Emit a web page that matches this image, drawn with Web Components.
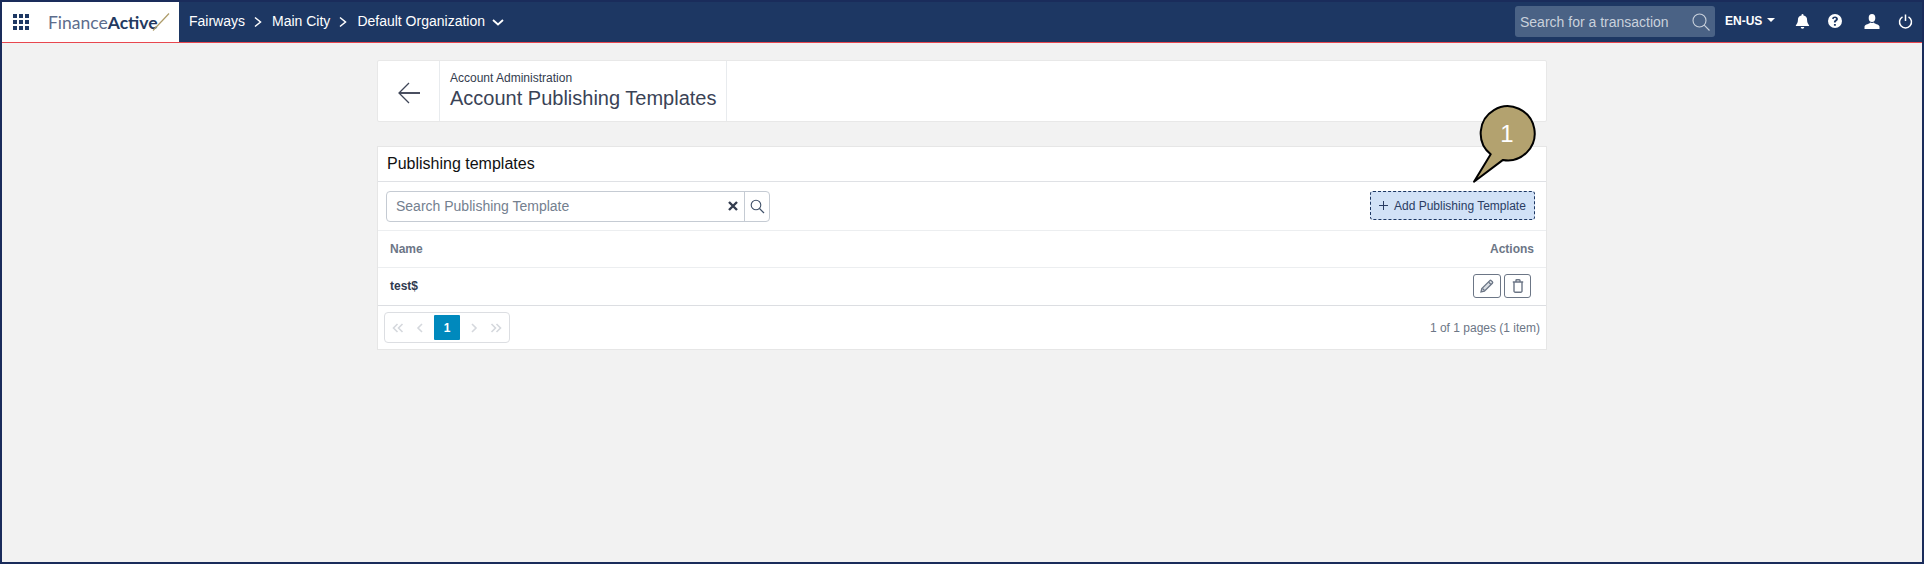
<!DOCTYPE html>
<html lang="en">
<head>
<meta charset="utf-8">
<title>Account Publishing Templates</title>
<style>
    html, body { margin: 0; height: 100%; }
    body { font-family: "Liberation Sans", Arial, sans-serif; background: #f2f2f2; overflow: hidden; }
</style>
</head>
<body>
<fa-shell>
    <fa-header></fa-header>
    <fa-page-title section="Account Administration" title-text="Account Publishing Templates"></fa-page-title>
    <fa-templates-card></fa-templates-card>
    <fa-callout label="1"></fa-callout>
</fa-shell>

<script>
class FaShell extends HTMLElement {
    connectedCallback() {
        this.attachShadow({ mode: "open" });
        this.shadowRoot.innerHTML = `
            <style>
                :host {
                    display: block;
                    position: relative;
                    box-sizing: border-box;
                    width: 1924px;
                    height: 564px;
                    border: 2px solid #1a2c5b;
                    background: #f2f2f2;
                }
                #content {
                    width: 1170px;
                    margin: 17px auto 0;
                    display: flex;
                    flex-direction: column;
                    gap: 24px;
                }
            </style>
            <slot name="header"></slot>
            <div id="content"><slot></slot></div>
        `;
        this.querySelector("fa-header").slot = "header";
    }
}

class FaHeader extends HTMLElement {
    connectedCallback() {
        this.attachShadow({ mode: "open" });
        this.shadowRoot.innerHTML = `
            <style>
                :host {
                    display: flex;
                    align-items: stretch;
                    height: 40px;
                    background: #1d3763;
                    border-bottom: 1px solid #e8474f;
                    color: #fff;
                    font-size: 14px;
                }
                #brand {
                    width: 177px;
                    background: #fff;
                    display: flex;
                    align-items: center;
                    color: #1d3763;
                }
                #grid {
                    margin-left: 11px;
                    display: grid;
                    grid-template-columns: repeat(3, 4px);
                    grid-auto-rows: 4px;
                    gap: 2px;
                    width: 16px;
                }
                #grid i { background: #1d3763; }
                #logo {
                    margin-left: 19px;
                    font-family: Lato, "Liberation Sans", sans-serif;
                    font-size: 17.5px;
                    color: #5d6d8c;
                    display: flex;
                    align-items: center;
                }
                #logo b { color: #23395f; font-weight: bold; }
                #logo svg { margin-left: -6px; }
                #crumbs {
                    display: flex;
                    align-items: center;
                    margin-left: 10px;
                    gap: 9px;
                }
                #crumbs span { position: relative; top: -1px; }
                #org-arrow { margin-left: -2px; }
                #right {
                    margin-left: auto;
                    display: flex;
                    align-items: center;
                    padding-right: 9px;
                }
                #search {
                    box-sizing: border-box;
                    width: 200px;
                    height: 31px;
                    margin-top: -1px;
                    background: #4a6285;
                    border-radius: 3px;
                    display: flex;
                    align-items: center;
                    justify-content: space-between;
                    padding: 0 5px;
                    color: #c9d1dc;
                }
                #lang {
                    margin-left: 10px;
                    font-size: 12px;
                    font-weight: bold;
                    display: flex;
                    align-items: center;
                    gap: 5px;
                    width: 70px;
                    margin-top: -2px;
                }
                #lang::after {
                    content: "";
                    border-left: 4px solid transparent;
                    border-right: 4px solid transparent;
                    border-top: 4px solid #fff;
                    margin-top: -3px;
                }
                #icons { display: flex; align-items: center; margin-top: -2px; }
                #icons svg { display: block; fill: #fff; }
            </style>
            <div id="brand">
                <div id="grid"><i></i><i></i><i></i><i></i><i></i><i></i><i></i><i></i><i></i></div>
                <div id="logo"><span>Finance<b>Active</b></span>
                    <svg width="18" height="18" viewBox="0 0 18 18"><path d="M1 17.500 17 .5" stroke="#ad9b68" stroke-width="1.200" fill="none"/></svg>
                </div>
            </div>
            <div id="crumbs">
                <span>Fairways</span>
                <svg width="9" height="12" viewBox="0 0 9 12"><path d="M1 1.500 6.500 6 1 10.500" fill="none" stroke="#fff" stroke-width="1.500"/></svg>
                <span>Main City</span>
                <svg width="9" height="12" viewBox="0 0 9 12"><path d="M1 1.500 6.500 6 1 10.500" fill="none" stroke="#fff" stroke-width="1.500"/></svg>
                <span>Default Organization</span>
                <svg id="org-arrow" width="12" height="9" viewBox="0 0 12 9"><path d="M1 2 6 6.500 11 2" fill="none" stroke="#fff" stroke-width="1.800"/></svg>
            </div>
            <div id="right">
                <div id="search">
                    <span>Search for a transaction</span>
                    <svg width="18" height="18" viewBox="0 0 18 18"><circle cx="7.500" cy="7.500" r="6.500" fill="none" stroke="#c9d1dc" stroke-width="1.100"/><path d="M12.200 12.200l5.300 5.300" stroke="#c9d1dc" stroke-width="1.100"/></svg>
                </div>
                <div id="lang">EN-US</div>
                <div id="icons">
                    <svg width="15" height="15" viewBox="0 0 14 15"><path d="M7 0a1 1 0 0 1 1 1v.6A4.400 4.400 0 0 1 11.600 6c0 3.600 2.100 4.700 2.100 6H.3c0-1.300 2.100-2.400 2.100-6A4.400 4.400 0 0 1 6 1.600V1a1 1 0 0 1 1-1zM5.200 13h3.600a1.800 1.800 0 0 1-3.600 0z"/></svg>
                    <svg width="14" height="14" viewBox="0 0 13 13" style="margin-left:18px"><path fill-rule="evenodd" d="M6.500 0a6.500 6.500 0 1 1 0 13 6.500 6.500 0 0 1 0-13zM5.500 9.300v1.500h1.800V9.300zM6.500 2.300c-1.500 0-2.500.8-2.700 2.100l1.500.4c.1-.7.500-1 1.100-1 .6 0 1 .3 1 .8 0 .4-.3.7-.8 1-.8.5-1.100 1-1.100 1.800v.6h1.700v-.4c0-.4.200-.6.700-.9.800-.5 1.300-1.100 1.300-2.100 0-1.400-1.100-2.300-2.700-2.300z"/></svg>
                    <svg width="16" height="15" viewBox="0 0 16 15" style="margin-left:22px"><ellipse cx="8" cy="4" rx="3.300" ry="4"/><path d="M6 8.500c0 1.500-5 1.500-5.500 4V15h15v-2.500c-.5-2.500-5.500-2.500-5.500-4-1 .6-3 .6-4 0z"/></svg>
                    <svg width="15" height="15" viewBox="0 0 15 15" style="margin-left:18px"><path d="M4.500 2.800a6 6 0 1 0 6 0" fill="none" stroke="#fff" stroke-width="1.500"/><path d="M7.500.5v6.500" stroke="#fff" stroke-width="1.500"/></svg>
                </div>
            </div>
        `;
    }
}

class FaPageTitle extends HTMLElement {
    connectedCallback() {
        this.attachShadow({ mode: "open" });
        this.shadowRoot.innerHTML = `
            <style>
                :host {
                    display: flex;
                    box-sizing: border-box;
                    height: 62px;
                    background: #fff;
                    border: 1px solid #e8e8e8;
                    border-radius: 2px;
                    color: #333c4e;
                }
                #back {
                    width: 62px;
                    border-right: 1px solid #e8ebee;
                    display: flex;
                    align-items: center;
                    justify-content: center;
                    box-sizing: border-box;
                }
                #back svg { margin-top: 3px; }
                #title {
                    padding: 10px 10px 0 10px;
                    border-right: 1px solid #e8ebee;
                }
                #section { font-size: 12px; line-height: 15px; }
                h1 { margin: 0; font-weight: normal; font-size: 20px; line-height: 24px; color: #3a4356; }
            </style>
            <div id="back">
                <svg width="24" height="22" viewBox="0 0 24 22"><path d="M23 11H2" fill="none" stroke="#4a4f60" stroke-width="2"/><path d="M12 1 2 11l10 10" fill="none" stroke="#3f4658" stroke-width="1.300"/></svg>
            </div>
            <div id="title">
                <div id="section">${this.getAttribute("section")}</div>
                <h1>${this.getAttribute("title-text")}</h1>
            </div>
        `;
    }
}

class FaTemplatesCard extends HTMLElement {
    connectedCallback() {
        this.attachShadow({ mode: "open" });
        this.shadowRoot.innerHTML = `
            <style>
                :host {
                    display: block;
                    box-sizing: border-box;
                    background: #fff;
                    border: 1px solid #e6e6e6;
                    color: #333c4e;
                    font-size: 12px;
                }
                #heading {
                    box-sizing: border-box;
                    height: 35px;
                    padding: 0 0 0 9px;
                    display: flex;
                    align-items: center;
                    font-size: 16px;
                    color: #111;
                    border-bottom: 1px solid #dfe1e5;
                }
                #toolbar {
                    height: 49px;
                    padding: 0 11px 0 8px;
                    display: flex;
                    align-items: center;
                    justify-content: space-between;
                    border-bottom: 1px solid #eceef0;
                    box-sizing: border-box;
                }
                #search {
                    box-sizing: border-box;
                    width: 384px;
                    height: 31px;
                    border: 1px solid #c5cbd3;
                    border-radius: 4px;
                    display: flex;
                    align-items: center;
                    font-size: 14px;
                    color: #74808f;
                }
                #search span { flex: 1; padding-left: 9px; }
                #clear { margin-right: 5px; display: block; }
                #go {
                    width: 24px;
                    height: 29px;
                    border-left: 1px solid #c5cbd3;
                    display: flex;
                    align-items: center;
                    justify-content: center;
                }
                #add {
                    box-sizing: border-box;
                    width: 165px;
                    height: 29px;
                    margin-top: -1px;
                    padding-left: 7px;
                    background: #d2e2f7;
                    border: 1px dashed #1d3763;
                    border-radius: 3px;
                    display: flex;
                    align-items: center;
                    gap: 5px;
                    color: #2a3c63;
                }
                .row {
                    display: flex;
                    align-items: center;
                    justify-content: space-between;
                    box-sizing: border-box;
                    padding: 0 12px;
                    font-weight: bold;
                }
                #thead { height: 37px; border-bottom: 1px solid #eceef0; color: #6c7686; }
                #trow { height: 38px; border-bottom: 1px solid #dcdee2; padding: 0 15px 2px 12px; color: #2f3a4f; }
                #actions { display: flex; gap: 3px; }
                .icon-btn {
                    box-sizing: border-box;
                    height: 24px;
                    border: 1px solid #6c7686;
                    border-radius: 3px;
                    display: flex;
                    align-items: center;
                    justify-content: center;
                }
                #pager-row {
                    height: 43px;
                    padding: 0 6px;
                    display: flex;
                    align-items: center;
                    justify-content: space-between;
                    color: #6c7686;
                }
                #pager {
                    box-sizing: border-box;
                    width: 126px;
                    height: 31px;
                    border: 1px solid #dcdee2;
                    border-radius: 4px;
                    display: flex;
                    align-items: center;
                    justify-content: space-between;
                    padding: 2px 7px;
                }
                #current {
                    width: 26px;
                    height: 25px;
                    background: #0089bd;
                    border-radius: 1px;
                    color: #fff;
                    font-weight: bold;
                    display: flex;
                    align-items: center;
                    justify-content: center;
                }
                #pager svg { display: block; }
            </style>
            <div id="heading">Publishing templates</div>
            <div id="toolbar">
                <div id="search">
                    <span>Search Publishing Template</span>
                    <svg id="clear" width="12" height="12" viewBox="0 0 12 12"><path d="M2 2l8 8M10 2l-8 8" stroke="#333c4e" stroke-width="2.400"/></svg>
                    <div id="go"><svg width="15" height="15" viewBox="0 0 15 15"><circle cx="6" cy="6" r="4.800" fill="none" stroke="#3f5068" stroke-width="1.100"/><path d="M9.500 9.500l4.500 4.500" stroke="#3f5068" stroke-width="1.200"/></svg></div>
                </div>
                <div id="add">
                    <svg width="11" height="11" viewBox="0 0 11 11"><path d="M5.500 1v9M1 5.500h9" stroke="#2a3c63" stroke-width="1"/></svg>
                    <span>Add Publishing Template</span>
                </div>
            </div>
            <div class="row" id="thead"><span>Name</span><span>Actions</span></div>
            <div class="row" id="trow">
                <span>test$</span>
                <div id="actions">
                    <div class="icon-btn" style="width:28px">
                        <svg width="14" height="14" viewBox="0 0 14 14"><path d="M1 13l.8-3.400L9.800 1.600a1 1 0 0 1 1.400 0l1.200 1.200a1 1 0 0 1 0 1.400L4.400 12.200z" fill="#d9dde3" stroke="#6c7686" stroke-width="1.300"/><path d="M2.500 9.500 4.500 11.500M8.500 3l2.500 2.500" fill="none" stroke="#6c7686" stroke-width="1.100"/></svg>
                    </div>
                    <div class="icon-btn" style="width:27px">
                        <svg width="12" height="14" viewBox="0 0 12 14"><path d="M2 3.500V12a1.200 1.200 0 0 0 1.200 1.200h5.600A1.200 1.200 0 0 0 10 12V3.500M.8 3h10.400M4 3V1.500A.7.7 0 0 1 4.700.8h2.600a.7.7 0 0 1 .7.700V3" fill="none" stroke="#6c7686" stroke-width="1.400"/></svg>
                    </div>
                </div>
            </div>
            <div id="pager-row">
                <div id="pager">
                    <svg width="12" height="10" viewBox="0 0 12 10"><path d="M5.500 1 1.500 5l4 4M10.500 1l-4 4 4 4" fill="none" stroke="#d5d8dd" stroke-width="1.600"/></svg>
                    <svg width="8" height="10" viewBox="0 0 8 10"><path d="M7 1 3 5l4 4" fill="none" stroke="#d5d8dd" stroke-width="1.600"/></svg>
                    <div id="current">1</div>
                    <svg width="8" height="10" viewBox="0 0 8 10"><path d="M1 1l4 4-4 4" fill="none" stroke="#d5d8dd" stroke-width="1.600"/></svg>
                    <svg width="12" height="10" viewBox="0 0 12 10"><path d="M1.500 1l4 4-4 4M6.500 1l4 4-4 4" fill="none" stroke="#d5d8dd" stroke-width="1.600"/></svg>
                </div>
                <span>1 of 1 pages (1 item)</span>
            </div>
        `;
    }
}

class FaCallout extends HTMLElement {
    connectedCallback() {
        this.attachShadow({ mode: "open" });
        this.shadowRoot.innerHTML = `
            <style>
                :host {
                    position: absolute;
                    left: 1466px;
                    top: 98px;
                    width: 80px;
                    height: 90px;
                    display: block;
                }
                svg { position: absolute; left: 0; top: 0; }
                span {
                    position: absolute;
                    left: 27px;
                    top: 20px;
                    width: 24px;
                    text-align: center;
                    color: #fff;
                    font-size: 24px;
                    line-height: 28px;
                }
            </style>
            <svg width="80" height="90" viewBox="0 0 80 90">
                <path d="M6 81.700 L22.700 54.300 A27 27 0 1 1 35 59.900 Z" fill="#b3a26f" stroke="#000" stroke-width="2" stroke-linejoin="round"/>
            </svg>
            <span>${this.getAttribute("label")}</span>
        `;
    }
}

customElements.define("fa-shell", FaShell);
customElements.define("fa-header", FaHeader);
customElements.define("fa-page-title", FaPageTitle);
customElements.define("fa-templates-card", FaTemplatesCard);
customElements.define("fa-callout", FaCallout);
</script>
</body>
</html>
